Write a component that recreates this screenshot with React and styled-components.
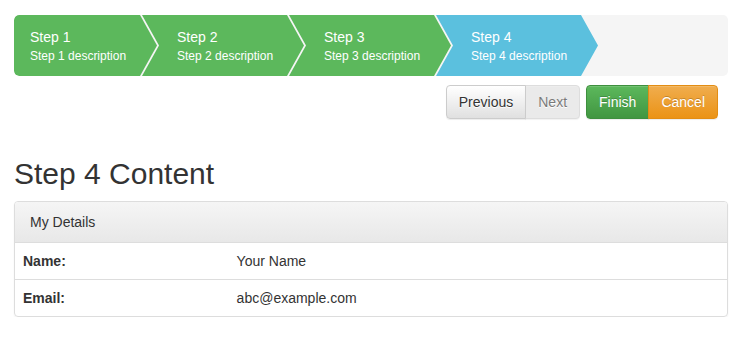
import React from 'react';
import styled, { createGlobalStyle } from 'styled-components';

const GlobalStyle = createGlobalStyle`
  body {
    margin: 0;
    background: #fff;
    font-family: "Liberation Sans", Arial, sans-serif;
    font-size: 14px;
    color: #333;
  }
`;

const ARROW = 17;

const steps = [
  { title: 'Step 1', desc: 'Step 1 description', state: 'done' },
  { title: 'Step 2', desc: 'Step 2 description', state: 'done' },
  { title: 'Step 3', desc: 'Step 3 description', state: 'done' },
  { title: 'Step 4', desc: 'Step 4 description', state: 'active' },
];

const Page = styled.div`
  padding: 15px 6px 0 14px;
`;

const StepBar = styled.ul`
  display: flex;
  margin: 0;
  padding: 0;
  list-style: none;
  height: 61px;
  background: #f5f5f5;
  border-radius: 5px;
  overflow: hidden;
`;

const Step = styled.li`
  flex: none;
  box-sizing: border-box;
  width: ${(p) => (p.$first ? 126 + ARROW : 145 + ARROW)}px;
  margin-left: ${(p) => (p.$first ? 0 : -15)}px;
  padding: 12px 0 10px ${(p) => (p.$first ? 16 : 35)}px;
  background: ${(p) => (p.$state === 'active' ? '#5bc0de' : '#5cb85c')};
  color: #fff;
  border-radius: ${(p) => (p.$first ? '5px 0 0 5px' : '0')};
  clip-path: ${(p) => (p.$first
    ? `polygon(0 0, calc(100% - ${ARROW}px) 0, 100% 50%, calc(100% - ${ARROW}px) 100%, 0 100%)`
    : `polygon(0 0, calc(100% - ${ARROW}px) 0, 100% 50%, calc(100% - ${ARROW}px) 100%, 0 100%, ${ARROW}px 50%)`)};
`;

const StepTitle = styled.div`
  font-size: 14px;
  line-height: 20px;
`;

const StepDesc = styled.div`
  font-size: 12px;
  line-height: 19px;
`;

const Toolbar = styled.div`
  display: flex;
  justify-content: flex-end;
  gap: 6px;
  padding: 9px 10px 0 0;
`;

const ButtonGroup = styled.div`
  display: flex;
`;

const variants = {
  default: {
    bg: 'linear-gradient(to bottom, #fff 0%, #e0e0e0 100%)',
    border: '#ccc',
    color: '#333',
    shadow: '0 1px 0 #fff',
  },
  success: {
    bg: 'linear-gradient(to bottom, #5cb85c 0%, #419641 100%)',
    border: '#3e8f3e',
    color: '#fff',
    shadow: '0 -1px 0 rgba(0,0,0,.2)',
  },
  warning: {
    bg: 'linear-gradient(to bottom, #f0ad4e 0%, #eb9316 100%)',
    border: '#e38d13',
    color: '#fff',
    shadow: '0 -1px 0 rgba(0,0,0,.2)',
  },
};

const Button = styled.button`
  font-family: inherit;
  font-size: 14px;
  line-height: 20px;
  padding: 6px 12px;
  border: 1px solid ${(p) => variants[p.$variant].border};
  background: ${(p) => (p.disabled ? '#e0e0e0' : variants[p.$variant].bg)};
  color: ${(p) => variants[p.$variant].color};
  text-shadow: ${(p) => variants[p.$variant].shadow};
  box-shadow: inset 0 1px 0 rgba(255,255,255,.15), 0 1px 1px rgba(0,0,0,.075);
  opacity: ${(p) => (p.disabled ? 0.65 : 1)};
  border-radius: 0;
  cursor: pointer;

  &:first-child {
    border-radius: 4px 0 0 4px;
  }
  &:last-child {
    border-radius: 0 4px 4px 0;
  }
  & + & {
    margin-left: -1px;
  }
`;

const Heading = styled.h2`
  margin: 38px 0 11px;
  font-size: 30px;
  font-weight: 500;
  line-height: 33px;
  color: #333;
`;

const Panel = styled.div`
  border: 1px solid #ddd;
  border-radius: 4px;
  box-shadow: 0 1px 2px rgba(0,0,0,.05);
  overflow: hidden;
`;

const PanelHeading = styled.div`
  padding: 10px 15px;
  line-height: 20px;
  background: linear-gradient(to bottom, #f5f5f5 0%, #e8e8e8 100%);
  border-bottom: 1px solid #ddd;
  color: #333;
`;

const Table = styled.table`
  width: 100%;
  border-collapse: collapse;
`;

const Row = styled.tr`
  & + & td {
    border-top: 1px solid #ddd;
  }
`;

const Cell = styled.td`
  padding: 8px;
  line-height: 20px;
  font-weight: ${(p) => (p.$label ? 700 : 400)};
  width: ${(p) => (p.$label ? '30%' : 'auto')};
`;

const details = [
  { label: 'Name:', value: 'Your Name' },
  { label: 'Email:', value: 'abc@example.com' },
];

export default function App() {
  return (
    <Page>
      <GlobalStyle />
      <StepBar>
        {steps.map((s, i) => (
          <Step key={s.title} $first={i === 0} $state={s.state}>
            <StepTitle>{s.title}</StepTitle>
            <StepDesc>{s.desc}</StepDesc>
          </Step>
        ))}
      </StepBar>
      <Toolbar>
        <ButtonGroup>
          <Button $variant="default">Previous</Button>
          <Button $variant="default" disabled>Next</Button>
        </ButtonGroup>
        <ButtonGroup>
          <Button $variant="success">Finish</Button>
          <Button $variant="warning">Cancel</Button>
        </ButtonGroup>
      </Toolbar>
      <Heading>Step 4 Content</Heading>
      <Panel>
        <PanelHeading>My Details</PanelHeading>
        <Table>
          <tbody>
            {details.map((d) => (
              <Row key={d.label}>
                <Cell $label>{d.label}</Cell>
                <Cell>{d.value}</Cell>
              </Row>
            ))}
          </tbody>
        </Table>
      </Panel>
    </Page>
  );
}
